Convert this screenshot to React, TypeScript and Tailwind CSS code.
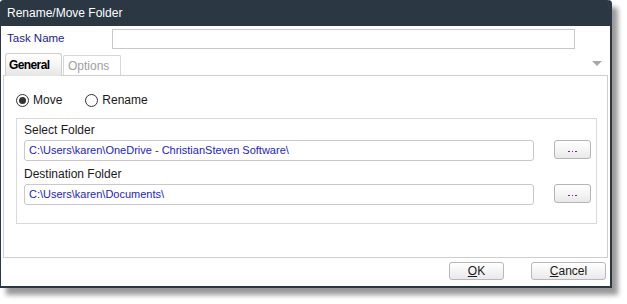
const ui = { fontFamily: '"Liberation Sans", Arial, sans-serif' };

function Radio({ checked, label }: { checked?: boolean; label: string }) {
  return (
    <label className="flex items-center gap-[4px] text-[12px] text-[#1a1a1a]">
      <span className="flex size-[13px] items-center justify-center rounded-full border border-[#333] bg-white">
        {checked && <span className="size-[7px] rounded-full bg-[#333]" />}
      </span>
      <span>{label}</span>
    </label>
  );
}

function FolderField({ label, value }: { label: string; value: string }) {
  return (
    <div className="flex flex-col">
      <div className="h-[21px] pt-[5px] text-[12px] leading-[13px] text-[#1a1a1a]">{label}</div>
      <div className="flex items-start">
        <div className="flex h-[21px] w-[510px] items-center rounded-[3px] border border-[#c9c9c9] bg-white px-[4px] text-[11px] text-[#2323c8]">
          {value}
        </div>
        <button className="ml-[20px] flex h-[19px] w-[37px] items-end justify-center gap-[2px] rounded-[3px] border border-[#b4b4b4] bg-[linear-gradient(180deg,#ffffff_0%,#f3f3f3_60%,#e8e8e8_100%)] pb-[6px]">
          <span className="size-[1.5px] bg-[#8a1aa8]" />
          <span className="size-[1.5px] bg-[#8a1aa8]" />
          <span className="size-[1.5px] bg-[#8a1aa8]" />
        </button>
      </div>
    </div>
  );
}

export default function App() {
  return (
    <div className="h-[304px] w-[627px] bg-white" style={ui}>
      <div className="flex h-[288px] w-[612px] flex-col rounded-t-[4px] border-r-2 border-b-2 border-l border-[#2b3742] bg-white shadow-[6px_7px_5px_rgba(0,0,0,0.4)]">
        <div className="-mx-[1px] flex h-[26px] items-center rounded-t-[4px] bg-[#2b3742] px-[7px] pb-[1px] text-[12px] text-white">
          Rename/Move Folder
        </div>

        <div className="mt-[3px] flex items-center">
          <span className="ml-[6px] w-[105px] text-[11.5px] text-[#221c8c]">Task Name</span>
          <div className="h-[20px] w-[463px] border border-[#c8c8c8] bg-white" />
        </div>

        <div className="mt-[4px] flex h-[22px] items-end pl-[4px] pr-[8px]">
          <div className="relative z-10 -mb-[1px] flex h-[23px] w-[57px] items-center rounded-t-[3px] border border-b-0 border-[#cfcfcf] bg-[linear-gradient(180deg,#ffffff_0%,#f4f4f4_55%,#e4e4e4_100%)] pl-[3px] text-[12px] font-bold tracking-[-0.6px] text-black">
            General
          </div>
          <div className="ml-[1px] flex h-[20px] w-[58px] items-center rounded-t-[2px] border border-b-0 border-[#d6d6d6] bg-white pl-[4px] text-[12px] text-[#a0a0a0]">
            Options
          </div>
          <div className="ml-auto mb-[9px] h-0 w-0 border-x-[5px] border-t-[5px] border-x-transparent border-t-[#a8a8a8]" />
        </div>

        <div className="mx-[2px] flex h-[183px] flex-col border border-[#cfcfcf] px-[12px]">
          <div className="mt-[15px] flex items-center gap-[23px]">
            <Radio checked label="Move" />
            <Radio label="Rename" />
          </div>
          <div className="mt-[9px] flex h-[106px] w-[581px] flex-col border border-[#d9d9d9] pl-[7px]">
            <FolderField label="Select Folder" value="C:\Users\karen\OneDrive - ChristianSteven Software\" />
            <div className="h-[2px]" />
            <FolderField label="Destination Folder" value="C:\Users\karen\Documents\" />
          </div>
        </div>

        <div className="mt-[4px] flex justify-end gap-[27px] pr-[4px]">
          <button className="h-[18px] w-[55px] rounded-[3px] border border-[#b8b8b8] bg-[linear-gradient(180deg,#ffffff_0%,#f3f3f3_55%,#e9e9e9_100%)] text-[12px] leading-[14px] text-[#1a1a1a]">
            <span className="underline underline-offset-[1px]">O</span>K
          </button>
          <button className="h-[18px] w-[75px] rounded-[3px] border border-[#b8b8b8] bg-[linear-gradient(180deg,#ffffff_0%,#f3f3f3_55%,#e9e9e9_100%)] text-[12px] leading-[14px] text-[#1a1a1a]">
            <span className="underline underline-offset-[1px]">C</span>ancel
          </button>
        </div>
      </div>
    </div>
  );
}
